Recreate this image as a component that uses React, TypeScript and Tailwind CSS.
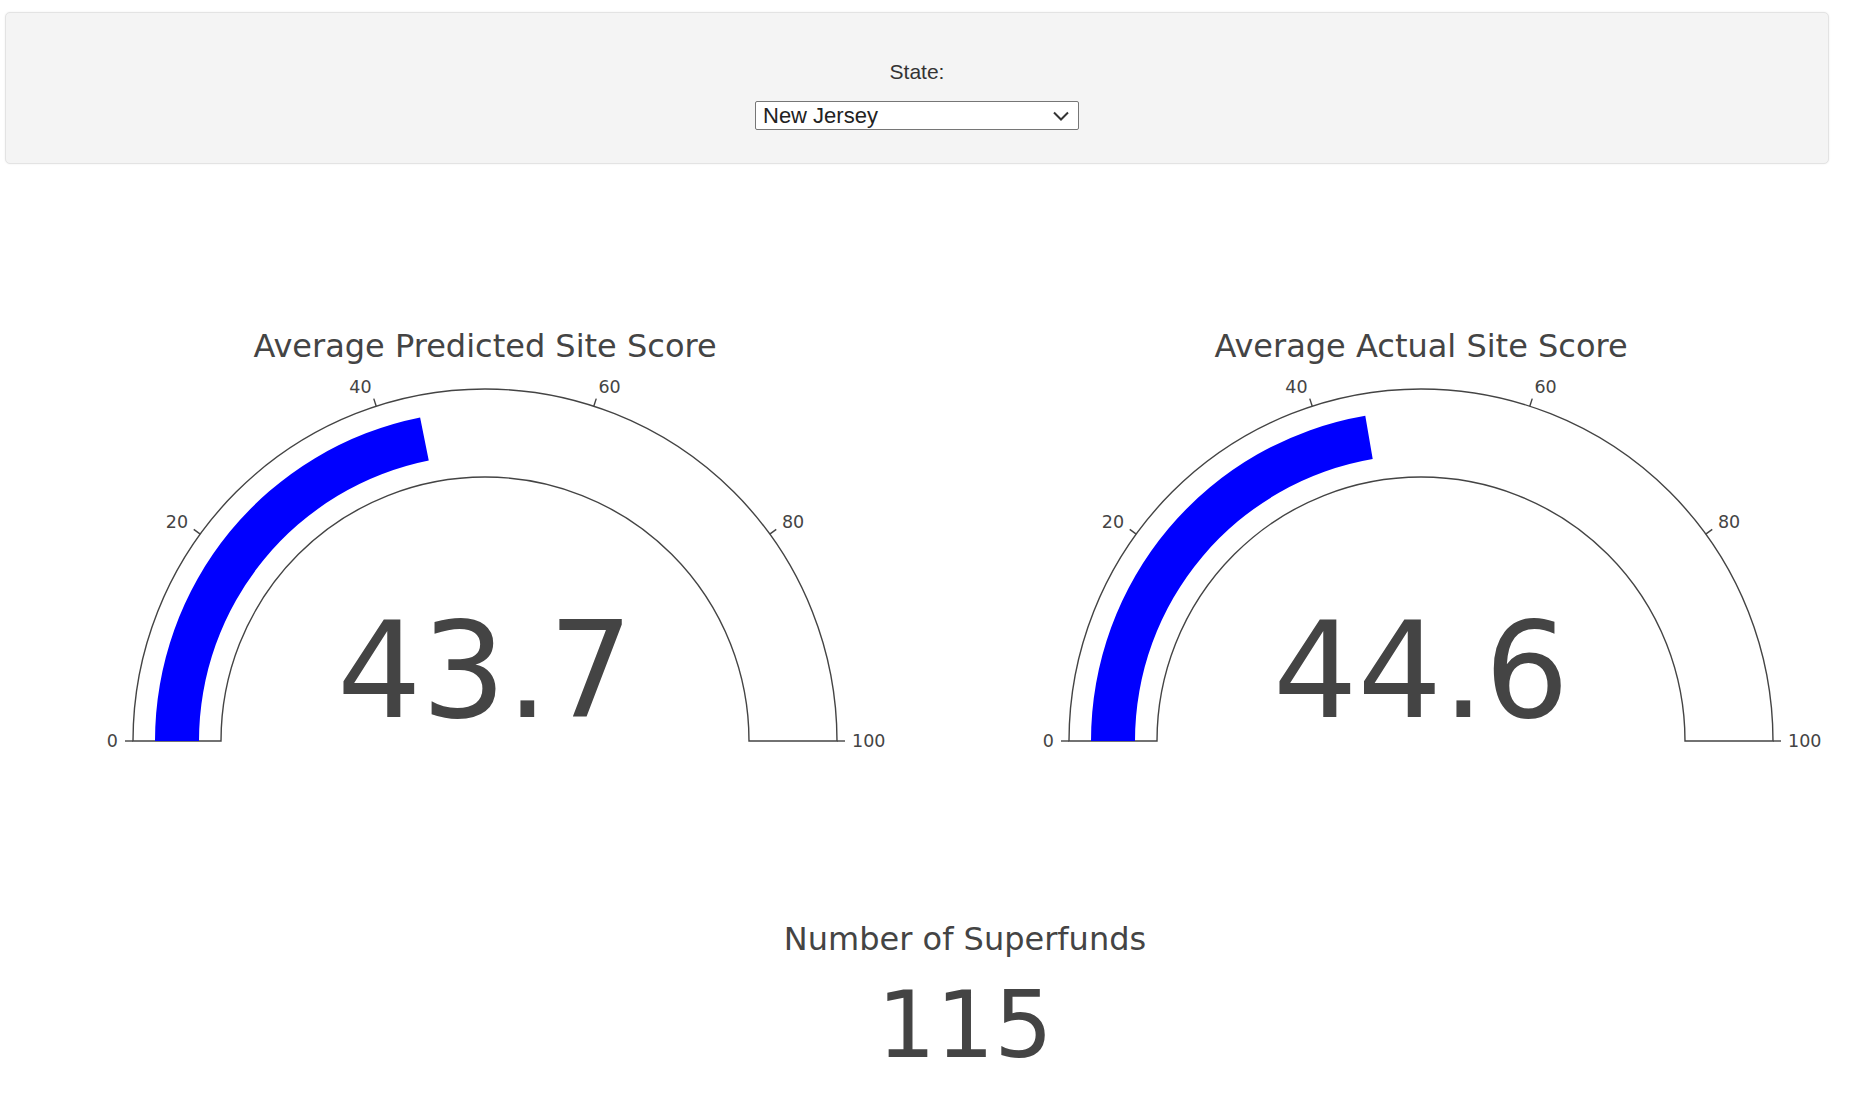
import React from "react";

const FONT = { fontFamily: '"DejaVu Sans", Verdana, sans-serif' };

// polar helper: angle measured from the right, counter-clockwise (degrees)
function pt(cx: number, cy: number, r: number, deg: number) {
  const a = (deg * Math.PI) / 180;
  return [cx + r * Math.cos(a), cy - r * Math.sin(a)];
}

function Gauge({ title, value }: { title: string; value: number }) {
  const cx = 400;
  const cy = 421;
  const R = 352;
  const r = 264;
  const barOut = 330;
  const barIn = 286;
  const end = 180 - value * 1.8;
  const [ox, oy] = pt(cx, cy, barOut, end);
  const [ix, iy] = pt(cx, cy, barIn, end);

  const frame = `M ${cx - R} ${cy} A ${R} ${R} 0 0 1 ${cx + R} ${cy} L ${cx + r} ${cy} A ${r} ${r} 0 0 0 ${cx - r} ${cy} Z`;
  const bar = `M ${cx - barOut} ${cy} A ${barOut} ${barOut} 0 0 1 ${ox} ${oy} L ${ix} ${iy} A ${barIn} ${barIn} 0 0 0 ${cx - barIn} ${cy} Z`;

  const ticks = [0, 20, 40, 60, 80, 100];

  return (
    <svg width={800} height={440} className="shrink-0" style={FONT}>
      <text x={cx} y={37} textAnchor="middle" fontSize={32} fill="#444">
        {title}
      </text>
      <path d={frame} fill="#fff" stroke="#444" strokeWidth={1.4} />
      <path d={bar} fill="#0000ff" />
      {ticks.map((t) => {
        const deg = 180 - t * 1.8;
        const [x1, y1] = pt(cx, cy, R, deg);
        const [x2, y2] = pt(cx, cy, R + 8, deg);
        const c = Math.cos((deg * Math.PI) / 180);
        const anchor = Math.abs(c) < 0.1 ? "middle" : c < 0 ? "end" : "start";
        const lx = cx + 367 * c;
        const ly = cy - 372 * Math.sin((deg * Math.PI) / 180);
        return (
          <g key={t}>
            <line x1={x1} y1={y1} x2={x2} y2={y2} stroke="#444" strokeWidth={1.4} />
            <text x={lx} y={ly} textAnchor={anchor} dominantBaseline="central" fontSize={17.5} fill="#444">
              {t}
            </text>
          </g>
        );
      })}
      <text x={cx} y={397} textAnchor="middle" fontSize={133} fill="#444">
        {value.toFixed(1)}
      </text>
    </svg>
  );
}

export default function App() {
  return (
    <div className="w-[1834px] bg-white pb-[40px]">
      {/* filter panel */}
      <div className="mx-[5px] mt-[12px] h-[152px] rounded-[5px] border border-[#e3e3e3] bg-[#f4f4f4] shadow-[0_0_2px_rgba(0,0,0,0.08)]">
        <div className="flex flex-col items-center pt-[48px]" style={{ fontFamily: '"Liberation Sans", Arial, sans-serif' }}>
          <div className="text-[21px] leading-none text-[#333]">State:</div>
          <div className="mt-[19px] flex h-[29px] w-[324px] items-center justify-between rounded-[2px] border border-[#767676] bg-white pl-[7px] pr-[9px]">
            <span className="text-[22px] leading-none text-[#222]">New Jersey</span>
            <svg width={16} height={10} viewBox="0 0 16 10">
              <polyline points="1,1.5 8,8.5 15,1.5" fill="none" stroke="#333" strokeWidth={2} />
            </svg>
          </div>
        </div>
      </div>

      {/* gauges */}
      <div className="mt-[156px] flex gap-[136px] pl-[85px]">
        <Gauge title="Average Predicted Site Score" value={43.7} />
        <Gauge title="Average Actual Site Score" value={44.6} />
      </div>

      {/* count indicator */}
      <div className="ml-[765px] mt-[163px] w-[400px] text-center text-[#444]" style={FONT}>
        <div className="text-[32px] leading-none">Number of Superfunds</div>
        <div className="mt-[25px] text-[92px] leading-none">115</div>
      </div>
    </div>
  );
}
